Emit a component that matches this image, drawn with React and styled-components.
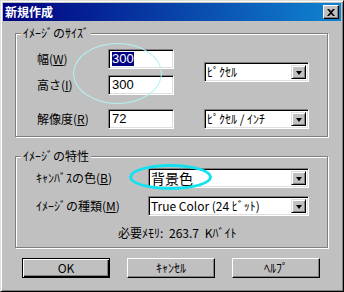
import React from "react";
import styled, { createGlobalStyle } from "styled-components";

const GlobalStyle = createGlobalStyle`
  html, body {
    margin: 0;
    padding: 0;
    background: #c0c0c0;
  }
  body {
    font-family: "Noto Sans CJK JP", "Liberation Sans", sans-serif;
    font-size: 12px;
    color: #000;
  }
`;

const Window = styled.div`
  position: relative;
  box-sizing: border-box;
  width: 344px;
  height: 292px;
  background: #c0c0c0;
  border-top: 1px solid #dfdfdf;
  border-left: 1px solid #dfdfdf;
  border-right: 1px solid #000;
  border-bottom: 1px solid #000;
  box-shadow: inset 1px 1px #fff, inset -1px -1px #808080;
  padding: 2px;
`;

const TitleBar = styled.div`
  display: flex;
  align-items: center;
  justify-content: space-between;
  height: 18px;
  padding: 0 2px 0 2px;
  background: linear-gradient(to right, #000080, #1084d0);
`;

const Title = styled.span`
  color: #fff;
  font-weight: bold;
  font-size: 12px;
  line-height: 18px;
`;

const CloseButton = styled.div`
  box-sizing: border-box;
  width: 16px;
  height: 14px;
  display: flex;
  align-items: center;
  justify-content: center;
  background: #c0c0c0;
  border-top: 1px solid #fff;
  border-left: 1px solid #fff;
  border-right: 1px solid #000;
  border-bottom: 1px solid #000;
  box-shadow: inset -1px -1px #808080;
`;

const Body = styled.div`
  padding: 0 13px 0 12px;
`;

const Group = styled.div`
  position: relative;
  box-sizing: border-box;
  height: ${(p) => p.$h}px;
  margin-top: ${(p) => p.$mt}px;
  border: 1px solid #808080;
  box-shadow: inset 1px 1px #fff, 1px 1px #fff;
  padding: ${(p) => p.$pad};
`;

const Legend = styled.span`
  position: absolute;
  top: -8px;
  left: 5px;
  padding: 0 2px;
  background: #c0c0c0;
  line-height: 14px;
`;

const FieldGrid = styled.div`
  display: grid;
  grid-template-columns: ${(p) => p.$cols};
  grid-auto-rows: 20px;
  row-gap: ${(p) => p.$gap || 0}px;
  align-items: center;
  margin-top: ${(p) => p.$mt || 0}px;
`;

const Label = styled.span`
  line-height: 14px;
  white-space: nowrap;
  u {
    text-decoration: underline;
    text-underline-offset: 1px;
  }
`;

const Sunken = styled.div`
  box-sizing: border-box;
  height: 20px;
  background: #fff;
  border-top: 1px solid #808080;
  border-left: 1px solid #808080;
  border-right: 1px solid #fff;
  border-bottom: 1px solid #fff;
  box-shadow: inset 1px 1px #000, inset -1px -1px #dfdfdf;
  display: flex;
  align-items: center;
  padding-left: 3px;
  line-height: 14px;
  white-space: nowrap;
  overflow: hidden;
`;

const Input = styled(Sunken)`
  width: 66px;
  font-family: "Liberation Sans", sans-serif;
  font-size: 13px;
`;

const Selected = styled.span`
  background: #000080;
  color: #fff;
`;

const Combo = styled(Sunken)`
  position: relative;
  width: ${(p) => p.$w}px;
  grid-row: ${(p) => p.$row || "auto"};
  grid-column: ${(p) => p.$col || "auto"};
  align-self: center;
  padding-left: 2px;
  font-size: ${(p) => (p.$big ? 14 : 12)}px;
`;

const ComboButton = styled.div`
  position: absolute;
  right: 2px;
  top: 2px;
  box-sizing: border-box;
  width: 15px;
  height: 14px;
  background: #c0c0c0;
  border-top: 1px solid #dfdfdf;
  border-left: 1px solid #dfdfdf;
  border-right: 1px solid #000;
  border-bottom: 1px solid #000;
  box-shadow: inset 1px 1px #fff, inset -1px -1px #808080;
  display: flex;
  align-items: center;
  justify-content: center;
`;

const Arrow = styled.div`
  width: 0;
  height: 0;
  border-left: 3.5px solid transparent;
  border-right: 3.5px solid transparent;
  border-top: 4px solid #000;
  margin-top: 1px;
`;

const Memory = styled.div`
  margin-top: 10px;
  padding-left: 82px;
  line-height: 14px;
  word-spacing: 3px;
`;

const ButtonRow = styled.div`
  display: flex;
  gap: 17px;
  margin: 10px 0 0 7px;
`;

const Button = styled.div`
  box-sizing: border-box;
  width: 88px;
  height: 20px;
  display: flex;
  align-items: center;
  justify-content: center;
  background: #c0c0c0;
  line-height: 14px;
  border: 1px solid #000;
  border-top-color: ${(p) => (p.$default ? "#000" : "#fff")};
  border-left-color: ${(p) => (p.$default ? "#000" : "#fff")};
  box-shadow: ${(p) =>
    p.$default
      ? "inset 1px 1px #fff, inset -1px -1px #000, inset -2px -2px #808080"
      : "inset -1px -1px #808080"};
`;

const Ring = styled.div`
  position: absolute;
  left: ${(p) => p.$x}px;
  top: ${(p) => p.$y}px;
  width: ${(p) => p.$w}px;
  height: ${(p) => p.$h}px;
  box-sizing: border-box;
  border-radius: 50%;
  border: ${(p) => p.$t}px solid ${(p) => p.$c};
  pointer-events: none;
`;

const Dropdown = ({ w, children, row, col, big }) => (
  <Combo $w={w} $row={row} $col={col} $big={big}>
    {children}
    <ComboButton>
      <Arrow />
    </ComboButton>
  </Combo>
);

export default function App() {
  return (
    <>
      <GlobalStyle />
      <Window>
        <TitleBar>
          <Title>新規作成</Title>
          <CloseButton>
            <svg width="8" height="7" viewBox="0 0 8 7">
              <path d="M0 0h2l2 2 2-2h2L5 3.5 8 7H6L4 5 2 7H0l3-3.5z" fill="#000" />
            </svg>
          </CloseButton>
        </TitleBar>
        <Body>
          <Group $h={104} $mt={12} $pad="15px 0 0 21px">
            <Legend>ｲﾒｰｼﾞのｻｲｽﾞ</Legend>
            <FieldGrid $cols="71px 96px 105px" $gap={6}>
              <Dropdown w={105} row="1 / span 2" col="3">
                ﾋﾟｸｾﾙ
              </Dropdown>
              <Label>
                幅(<u>W</u>)
              </Label>
              <Input>
                <Selected>300</Selected>
              </Input>
              <Label>
                高さ(<u>I</u>)
              </Label>
              <Input>300</Input>
            </FieldGrid>
            <FieldGrid $cols="71px 96px 105px" $mt={14}>
              <Label>
                解像度(<u>R</u>)
              </Label>
              <Input>72</Input>
              <Dropdown w={105}>ﾋﾟｸｾﾙ / ｲﾝﾁ</Dropdown>
            </FieldGrid>
          </Group>
          <Group $h={92} $mt={19} $pad="11px 0 0 20px">
            <Legend>ｲﾒｰｼﾞの特性</Legend>
            <FieldGrid $cols="112px 161px" $gap={8}>
              <Label>
                ｷｬﾝﾊﾞｽの色(<u>B</u>)
              </Label>
              <Dropdown w={161} big>
                背景色
              </Dropdown>
              <Label>
                ｲﾒｰｼﾞの種類(<u>M</u>)
              </Label>
              <Dropdown w={161}>True Color (24 ﾋﾞｯﾄ)</Dropdown>
            </FieldGrid>
            <Memory>必要ﾒﾓﾘ: 263.7 Kﾊﾞｲﾄ</Memory>
          </Group>
          <ButtonRow>
            <Button $default>OK</Button>
            <Button>ｷｬﾝｾﾙ</Button>
            <Button>ﾍﾙﾌﾟ</Button>
          </ButtonRow>
        </Body>
        <Ring $x={72} $y={42} $w={89} $h={61} $t={1} $c="#b4f2f2" />
        <Ring $x={128} $y={163} $w={83} $h={26} $t={3} $c="#12e2f0" />
      </Window>
    </>
  );
}
